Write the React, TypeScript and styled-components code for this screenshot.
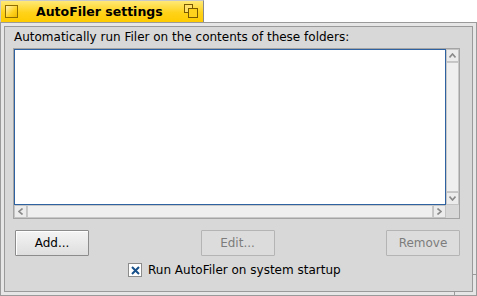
import React from "react";
import styled, { createGlobalStyle } from "styled-components";

const GlobalStyle = createGlobalStyle`
  html, body {
    margin: 0;
    padding: 0;
    background: #ffffff;
  }
  body {
    font-family: "DejaVu Sans", "Noto Sans", sans-serif;
    font-size: 12px;
    color: #000;
  }
`;

export default function App() {
  return (
    <>
      <GlobalStyle />
      <Desktop>
        <TitleTab>
          <CloseBox />
          <TitleText>AutoFiler settings</TitleText>
          <ZoomBox>
            <svg width="14" height="14" viewBox="0 0 14 14">
              <rect x="0.5" y="0.5" width="8" height="8" fill="#ffe06a" stroke="#7a5a00" />
              <rect x="4.5" y="4.5" width="9" height="9" fill="#ffd21e" stroke="#7a5a00" />
            </svg>
          </ZoomBox>
        </TitleTab>
        <WindowFrame>
          <FrameInner>
            <Panel>
              <Label>Automatically run Filer on the contents of these folders:</Label>
              <ScrollView>
                <ListRow>
                  <FolderList />
                  <VScroll>
                    <ArrowCell $dir="up" />
                    <Track />
                    <ArrowCell $dir="down" />
                  </VScroll>
                </ListRow>
                <HScroll>
                  <ArrowCell $dir="left" />
                  <Track />
                  <ArrowCell $dir="right" />
                </HScroll>
              </ScrollView>
              <ButtonRow>
                <Button>Add...</Button>
                <Button disabled>Edit...</Button>
                <Button disabled>Remove</Button>
              </ButtonRow>
              <CheckRow>
                <CheckBox>
                  <svg width="9" height="9" viewBox="0 0 9 9">
                    <path d="M1 1 L8 8 M8 1 L1 8" stroke="#17508a" strokeWidth="2" />
                  </svg>
                </CheckBox>
                <span>Run AutoFiler on system startup</span>
              </CheckRow>
            </Panel>
          </FrameInner>
          <ResizeTickBottom />
          <ResizeTickRight />
        </WindowFrame>
      </Desktop>
    </>
  );
}

type Dir = "up" | "down" | "left" | "right";

const arrowRotation: Record<Dir, number> = { up: 0, right: 90, down: 180, left: 270 };

const ArrowCell = ({ $dir }: { $dir: Dir }) => (
  <ArrowBox>
    <svg width="7" height="5" viewBox="0 0 7 5" style={{ transform: `rotate(${arrowRotation[$dir]}deg)` }}>
      <path d="M0.5 4.5 L3.5 1 L6.5 4.5" fill="none" stroke="#8a8a8a" strokeWidth="1.6" />
    </svg>
  </ArrowBox>
);

const Desktop = styled.div`
  width: 477px;
  height: 296px;
  display: flex;
  flex-direction: column;
  overflow: hidden;
`;

const TitleTab = styled.div`
  width: 204px;
  height: 22px;
  box-sizing: border-box;
  display: flex;
  align-items: center;
  padding: 0 5px 1px 4px;
  background: linear-gradient(#ffe977, #ffd21a 55%, #ffcb00);
  border: 1px solid #c8c8c8;
  border-bottom: none;
  border-right-color: #8a8a8a;
`;

const CloseBox = styled.div`
  width: 13px;
  height: 13px;
  box-sizing: border-box;
  border: 1px solid #8f6d00;
  background: linear-gradient(135deg, #fff3b8, #ffd21e 60%, #f0b800);
`;

const TitleText = styled.div`
  flex: 1;
  padding-left: 18px;
  font-weight: bold;
  font-size: 12.5px;
  color: #000;
  white-space: nowrap;
`;

const ZoomBox = styled.div`
  width: 14px;
  height: 14px;
  display: flex;
`;

const WindowFrame = styled.div`
  position: relative;
  flex: 1;
  box-sizing: border-box;
  border: 1px solid #9a9a9a;
  background: #e6e6e6;
  padding: 3px;
  display: flex;
`;

const FrameInner = styled.div`
  flex: 1;
  display: flex;
  border: 1px solid #9a9a9a;
`;

const Panel = styled.div`
  flex: 1;
  background: #d8d8d8;
  padding: 2px 12px 0 8px;
  display: flex;
  flex-direction: column;
`;

const Label = styled.div`
  height: 16px;
  line-height: 16px;
  padding-left: 1px;
  white-space: nowrap;
`;

const ScrollView = styled.div`
  margin-top: 3px;
  width: 447px;
  height: 171px;
  box-sizing: border-box;
  border: 1px solid #a4a4a4;
  display: flex;
  flex-direction: column;
`;

const ListRow = styled.div`
  flex: 1;
  display: flex;
`;

const FolderList = styled.div`
  flex: 1;
  background: #ffffff;
  border: 1px solid #2f62a0;
`;

const VScroll = styled.div`
  width: 13px;
  display: flex;
  flex-direction: column;
  background: #efefef;
`;

const HScroll = styled.div`
  height: 13px;
  display: flex;
  background: #efefef;
  margin-right: 13px;
`;

const ArrowBox = styled.div`
  width: 13px;
  height: 13px;
  box-sizing: border-box;
  border: 1px solid #c4c4c4;
  background: #ececec;
  display: flex;
  align-items: center;
  justify-content: center;
`;

const Track = styled.div`
  flex: 1;
  background: #efefef;
  border: 1px solid #c8c8c8;
`;

const ButtonRow = styled.div`
  margin-top: 11px;
  width: 445px;
  display: flex;
  justify-content: space-between;
  padding-left: 2px;
`;

const Button = styled.button`
  width: 74px;
  height: 26px;
  box-sizing: border-box;
  font-family: "DejaVu Sans", "Noto Sans", sans-serif;
  font-size: 12px;
  color: ${(p) => (p.disabled ? "#7c7c7c" : "#000")};
  background: ${(p) =>
    p.disabled ? "#dcdcdc" : "linear-gradient(#f4f4f4, #dedede)"};
  border: 1px solid ${(p) => (p.disabled ? "#b4b4b4" : "#8c8c8c")};
  box-shadow: ${(p) => (p.disabled ? "none" : "inset 1px 1px 0 #ffffff")};
  border-radius: 1px;
  padding: 0;
`;

const CheckRow = styled.div`
  margin-top: 7px;
  display: flex;
  align-items: center;
  gap: 6px;
  padding-left: 115px;
  white-space: nowrap;
`;

const CheckBox = styled.div`
  width: 14px;
  height: 14px;
  box-sizing: border-box;
  border: 1px solid #8c8c8c;
  background: #ffffff;
  display: flex;
  align-items: center;
  justify-content: center;
`;

const ResizeTickBottom = styled.div`
  position: absolute;
  left: 453px;
  bottom: 0;
  width: 1px;
  height: 4px;
  background: #9a9a9a;
`;

const ResizeTickRight = styled.div`
  position: absolute;
  right: 0;
  top: 251px;
  width: 4px;
  height: 1px;
  background: #9a9a9a;
`;
